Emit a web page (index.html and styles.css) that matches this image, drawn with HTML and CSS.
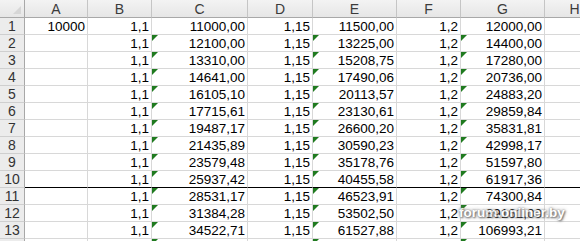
FILE: index.html
```html
<!DOCTYPE html>
<html>
<head>
<meta charset="utf-8">
<link rel="stylesheet" href="styles.css">
</head>
<body>
<div class="sheet">
  <div class="hd corner"><span class="corner-tri"></span></div>
  <div class="hd">A</div><div class="hd">B</div><div class="hd">C</div><div class="hd">D</div><div class="hd">E</div><div class="hd">F</div><div class="hd">G</div><div class="hd">H</div>

  <div class="rn">1</div><div class="c">10000</div><div class="c">1,1</div><div class="c">11000,00</div><div class="c">1,15</div><div class="c">11500,00</div><div class="c">1,2</div><div class="c">12000,00</div><div class="c"></div>
  <div class="rn">2</div><div class="c"></div><div class="c">1,1</div><div class="c t">12100,00</div><div class="c">1,15</div><div class="c t">13225,00</div><div class="c">1,2</div><div class="c t">14400,00</div><div class="c"></div>
  <div class="rn">3</div><div class="c"></div><div class="c">1,1</div><div class="c t">13310,00</div><div class="c">1,15</div><div class="c t">15208,75</div><div class="c">1,2</div><div class="c t">17280,00</div><div class="c"></div>
  <div class="rn">4</div><div class="c"></div><div class="c">1,1</div><div class="c t">14641,00</div><div class="c">1,15</div><div class="c t">17490,06</div><div class="c">1,2</div><div class="c t">20736,00</div><div class="c"></div>
  <div class="rn">5</div><div class="c"></div><div class="c">1,1</div><div class="c t">16105,10</div><div class="c">1,15</div><div class="c t">20113,57</div><div class="c">1,2</div><div class="c t">24883,20</div><div class="c"></div>
  <div class="rn">6</div><div class="c"></div><div class="c">1,1</div><div class="c t">17715,61</div><div class="c">1,15</div><div class="c t">23130,61</div><div class="c">1,2</div><div class="c t">29859,84</div><div class="c"></div>
  <div class="rn">7</div><div class="c"></div><div class="c">1,1</div><div class="c t">19487,17</div><div class="c">1,15</div><div class="c t">26600,20</div><div class="c">1,2</div><div class="c t">35831,81</div><div class="c"></div>
  <div class="rn">8</div><div class="c"></div><div class="c">1,1</div><div class="c t">21435,89</div><div class="c">1,15</div><div class="c t">30590,23</div><div class="c">1,2</div><div class="c t">42998,17</div><div class="c"></div>
  <div class="rn">9</div><div class="c"></div><div class="c">1,1</div><div class="c t">23579,48</div><div class="c">1,15</div><div class="c t">35178,76</div><div class="c">1,2</div><div class="c t">51597,80</div><div class="c"></div>
  <div class="rn">10</div><div class="c bb"></div><div class="c bb">1,1</div><div class="c bb t">25937,42</div><div class="c bb">1,15</div><div class="c bb t">40455,58</div><div class="c bb">1,2</div><div class="c bb t">61917,36</div><div class="c bb"></div>
  <div class="rn">11</div><div class="c"></div><div class="c">1,1</div><div class="c t">28531,17</div><div class="c">1,15</div><div class="c t">46523,91</div><div class="c">1,2</div><div class="c t">74300,84</div><div class="c"></div>
  <div class="rn">12</div><div class="c"></div><div class="c">1,1</div><div class="c t">31384,28</div><div class="c">1,15</div><div class="c t">53502,50</div><div class="c">1,2</div><div class="c t">89161,00</div><div class="c"></div>
  <div class="rn">13</div><div class="c"></div><div class="c">1,1</div><div class="c t">34522,71</div><div class="c">1,15</div><div class="c t">61527,88</div><div class="c">1,2</div><div class="c t">106993,21</div><div class="c"></div>
  <div class="rn"></div><div class="c"></div><div class="c"></div><div class="c t"></div><div class="c"></div><div class="c t"></div><div class="c"></div><div class="c t"></div><div class="c"></div>
</div>
<div class="watermark">forum.onliner.by</div>
</body>
</html>
```
FILE: styles.css
```css
html, body {
  margin: 0;
  padding: 0;
  background: #ffffff;
  overflow: hidden;
}
body {
  width: 580px;
  height: 241px;
  position: relative;
  font-family: "Liberation Sans", Arial, sans-serif;
}
.sheet {
  display: grid;
  grid-template-columns: 25px 63px 64px 96px 65px 84px 64px 84px 60px;
  grid-template-rows: 18px repeat(14, 17px);
}
.hd {
  background: linear-gradient(#f3f3f3, #e6e6e6);
  border-right: 1px solid #c5c5c5;
  border-bottom: 1px solid #a8a8a8;
  box-sizing: border-box;
  color: #3b3b3b;
  font-size: 14px;
  text-align: center;
  line-height: 18px;
}
.corner {
  position: relative;
  border-right-color: #a8a8a8;
}
.corner-tri {
  position: absolute;
  right: 3px;
  bottom: 3px;
  width: 0;
  height: 0;
  border-left: 8px solid transparent;
  border-bottom: 8px solid #d6d6d6;
}
.rn {
  background: #ececec;
  border-right: 1px solid #a8a8a8;
  border-bottom: 1px solid #cfcfcf;
  box-sizing: border-box;
  color: #333333;
  font-size: 14px;
  text-align: center;
  line-height: 17px;
}
.c {
  position: relative;
  border-right: 1px solid #d8d8d8;
  border-bottom: 1px solid #d8d8d8;
  box-sizing: border-box;
  color: #000000;
  font-size: 13.5px;
  text-align: right;
  padding-right: 2px;
  line-height: 17px;
  white-space: nowrap;
}
.c.bb {
  border-bottom: 1px solid #000000;
}
.c.t::before {
  content: "";
  position: absolute;
  left: 0;
  top: 0;
  width: 0;
  height: 0;
  border-top: 6px solid #1f7a1f;
  border-right: 6px solid transparent;
}
.watermark {
  position: absolute;
  left: 459px;
  top: 205px;
  color: #ffffff;
  font-family: "Liberation Sans", Arial, sans-serif;
  font-weight: bold;
  font-size: 13.5px;
  opacity: 0.85;
  text-shadow: 0 0 2px #666666, 1px 1px 2px #555555, 0 0 4px #999999;
}
```
